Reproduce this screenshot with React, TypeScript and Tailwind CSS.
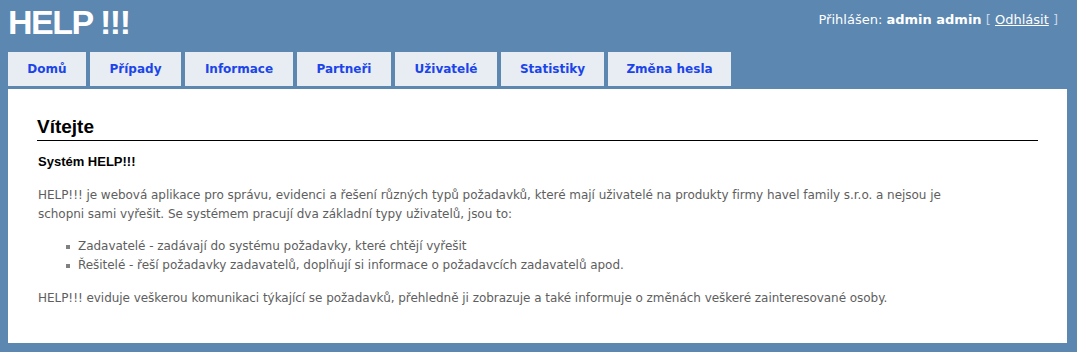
import React from "react";

const tabs: { label: string; w: string }[] = [
  { label: "Domů", w: "w-[78px]" },
  { label: "Případy", w: "w-[91px]" },
  { label: "Informace", w: "w-[108px]" },
  { label: "Partneři", w: "w-[94px]" },
  { label: "Uživatelé", w: "w-[102px]" },
  { label: "Statistiky", w: "w-[103px]" },
  { label: "Změna hesla", w: "w-[123px]" },
];

export default function App() {
  return (
    <div className="w-[1077px] h-[352px] bg-[#5b87b1] px-[8px] pt-[4px] overflow-hidden">
      <div className="flex justify-between items-start h-[48px]">
        <h1 className="font-['Liberation_Sans',Arial,sans-serif] font-bold text-[34px] leading-[34px] text-white tracking-[-1.5px] mt-[1px]">
          HELP !!!
        </h1>
        <div className="font-['DejaVu_Sans',Verdana,sans-serif] text-[13px] text-white mt-[6px] mr-[11px]">
          Přihlášen: <span className="font-bold">admin admin</span>{" "}
          <span className="text-[#c9d6e6]">[</span>{" "}
          <a href="#" className="underline text-white">Odhlásit</a>{" "}
          <span className="text-[#c9d6e6]">]</span>
        </div>
      </div>
      <div className="flex gap-[4px] h-[34px]">
        {tabs.map((t) => (
          <div
            key={t.label}
            className={`${t.w} h-[34px] bg-[#e8edf4] flex items-center justify-center font-['DejaVu_Sans',Verdana,sans-serif] font-bold text-[12px] text-[#1b45e8]`}
          >
            {t.label}
          </div>
        ))}
      </div>
      <div className="mt-[3px] w-[1059px] h-[254px] bg-white px-[29px] pt-[27px]">
        <h2 className="font-['Liberation_Sans',Arial,sans-serif] font-bold text-[19px] leading-[22px] text-black border-b border-black pb-[2px]">
          Vítejte
        </h2>
        <h3 className="font-['Liberation_Sans',Arial,sans-serif] font-bold text-[13px] text-black mt-[11px] ml-[1px]">
          Systém HELP!!!
        </h3>
        <div className="font-['DejaVu_Sans',Verdana,sans-serif] text-[12px] tracking-[-0.04px] leading-[19px] text-[#5e5e5e] ml-[1px]">
          <p className="mt-[14px]">
            HELP!!! je webová aplikace pro správu, evidenci a řešení různých typů požadavků, které mají uživatelé na produkty firmy havel family s.r.o. a nejsou je
            <br />
            schopni sami vyřešit. Se systémem pracují dva základní typy uživatelů, jsou to:
          </p>
          <ul className="mt-[13px] ml-[28px]">
            <li className="flex items-center">
              <span className="w-[4px] h-[4px] bg-[#808080] mr-[8px] mt-[2px]" />
              Zadavatelé - zadávají do systému požadavky, které chtějí vyřešit
            </li>
            <li className="flex items-center">
              <span className="w-[4px] h-[4px] bg-[#808080] mr-[8px] mt-[2px]" />
              Řešitelé - řeší požadavky zadavatelů, doplňují si informace o požadavcích zadavatelů apod.
            </li>
          </ul>
          <p className="mt-[14px]">
            HELP!!! eviduje veškerou komunikaci týkající se požadavků, přehledně ji zobrazuje a také informuje o změnách veškeré zainteresované osoby.
          </p>
        </div>
      </div>
    </div>
  );
}
